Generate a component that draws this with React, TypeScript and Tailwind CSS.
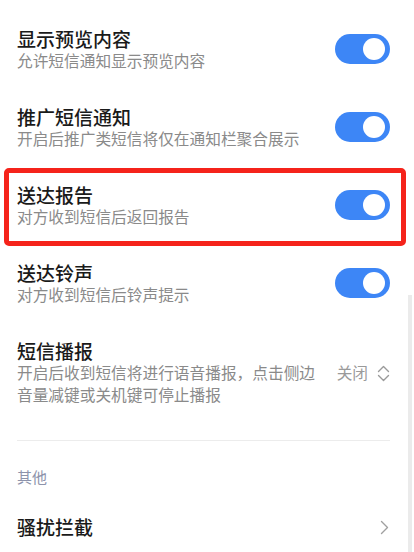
import React from 'react';

const FONT = { fontFamily: '"Noto Sans CJK SC", "Noto Sans", sans-serif' };

function Toggle() {
    return (
        <div className="w-[55px] h-[30px] rounded-full bg-[#3d86f6] flex items-center justify-end pr-[5px] shrink-0 mb-[3px]">
            <div className="w-[22px] h-[22px] rounded-full bg-white" />
        </div>
    );
}

function ToggleRow({ title, desc, marked }: { title: string; desc: string; marked?: boolean }) {
    return (
        <div className="relative flex items-center justify-between pl-[17px] pr-[24px] py-[17px]">
            <div className="flex flex-col">
                <span className="text-[19px] leading-[22px] font-medium text-[#1a1a1a]">{title}</span>
                <span className="text-[15.7px] leading-[22px] text-[#8a8a8a]">{desc}</span>
            </div>
            <Toggle />
            {marked && (
                <div className="absolute left-[4px] right-[8px] top-[1px] bottom-[-1px] border-[5px] border-[#f5231b] rounded-[5px] pointer-events-none" />
            )}
        </div>
    );
}

export default function App() {
    return (
        <div className="relative w-[414px] h-[552px] overflow-hidden bg-white" style={FONT}>
            <div className="pt-[11px]">
                <ToggleRow title="显示预览内容" desc="允许短信通知显示预览内容" />
                <ToggleRow title="推广短信通知" desc="开启后推广类短信将仅在通知栏聚合展示" />
                <ToggleRow title="送达报告" desc="对方收到短信后返回报告" marked />
                <ToggleRow title="送达铃声" desc="对方收到短信后铃声提示" />

                <div className="flex items-center justify-between pl-[17px] pr-[24px] py-[17px]">
                    <div className="flex flex-col w-[304px]">
                        <span className="text-[19px] leading-[22px] font-medium text-[#1a1a1a]">短信播报</span>
                        <span className="text-[15.7px] leading-[22px] text-[#8a8a8a]">
                            开启后收到短信将进行语音播报，点击侧边音量减键或关机键可停止播报
                        </span>
                    </div>
                    <div className="flex items-center gap-[9px]">
                        <span className="text-[15.7px] leading-[22px] text-[#9a9a9a]">关闭</span>
                        <svg width="13" height="17" viewBox="0 0 13 17" fill="none" stroke="#9a9a9a" strokeWidth="1.4" strokeLinecap="round" strokeLinejoin="round">
                            <path d="M1.5 6.5 L6.5 1.5 L11.5 6.5" />
                            <path d="M1.5 10.5 L6.5 15.5 L11.5 10.5" />
                        </svg>
                    </div>
                </div>

                <div className="ml-[17px] mr-[24px] h-px bg-[#ececec] mt-[17px]" />

                <div className="pl-[17px] pt-[25px] pb-[28px] text-[15px] leading-[22px] text-[#8d93ab]">其他</div>

                <div className="flex items-center justify-between pl-[17px] pr-[25px]">
                    <span className="text-[19px] leading-[22px] font-medium text-[#1a1a1a]">骚扰拦截</span>
                    <svg width="9" height="15" viewBox="0 0 9 15" fill="none" stroke="#a0a0a0" strokeWidth="1.4" strokeLinecap="round" strokeLinejoin="round">
                        <path d="M1.5 1.5 L7.5 7.5 L1.5 13.5" />
                    </svg>
                </div>
            </div>

            <div className="absolute right-[2px] top-[295px] bottom-0 w-[4px] bg-[#ebebeb]" />
        </div>
    );
}
